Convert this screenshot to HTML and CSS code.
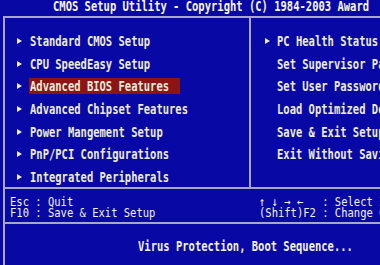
FILE: index.html
```html
<!DOCTYPE html>
<html>
<head>
<meta charset="utf-8">
<link rel="stylesheet" href="styles.css">
</head>
<body>
<div class="screen">
  <div class="title"><span class="t">CMOS Setup Utility - Copyright (C) 1984-2003 Award</span></div>
  <div class="frame">
    <div class="menu">
      <div class="col left">
        <div class="row"><i class="arr"></i><span class="lab"><span class="t">Standard CMOS Setup</span></span></div>
        <div class="row"><i class="arr"></i><span class="lab"><span class="t">CPU SpeedEasy Setup</span></span></div>
        <div class="row sel"><i class="arr"></i><span class="lab"><span class="t">Advanced BIOS Features</span></span></div>
        <div class="row"><i class="arr"></i><span class="lab"><span class="t">Advanced Chipset Features</span></span></div>
        <div class="row"><i class="arr"></i><span class="lab"><span class="t">Power Mangement Setup</span></span></div>
        <div class="row"><i class="arr"></i><span class="lab"><span class="t">PnP/PCI Configurations</span></span></div>
        <div class="row"><i class="arr"></i><span class="lab"><span class="t">Integrated Peripherals</span></span></div>
      </div>
      <div class="col right">
        <div class="row"><i class="arr"></i><span class="lab"><span class="t">PC Health Status</span></span></div>
        <div class="row"><i class="arr none"></i><span class="lab"><span class="t">Set Supervisor Password</span></span></div>
        <div class="row"><i class="arr none"></i><span class="lab"><span class="t">Set User Password</span></span></div>
        <div class="row"><i class="arr none"></i><span class="lab"><span class="t">Load Optimized Defaults</span></span></div>
        <div class="row"><i class="arr none"></i><span class="lab"><span class="t">Save &amp; Exit Setup</span></span></div>
        <div class="row"><i class="arr none"></i><span class="lab"><span class="t">Exit Without Saving</span></span></div>
      </div>
    </div>
    <div class="footer">
      <div class="keys l"><span class="t">Esc : Quit</span><span class="t">F10 : Save &amp; Exit Setup</span></div>
      <div class="keys r"><span class="t">↑ ↓ → ←   : Select Item</span><span class="t">(Shift)F2 : Change Color</span></div>
    </div>
    <div class="status"><span class="t">Virus Protection, Boot Sequence...</span></div>
  </div>
</div>
</body>
</html>
```
FILE: styles.css
```css
html, body {
  margin: 0;
  padding: 0;
}
body {
  background: #0808a4;
  overflow: hidden;
  font-family: "DejaVu Sans Mono", monospace;
  font-weight: bold;
  font-size: 13.7px;
  color: #ececdc;
}
.screen {
  width: 380px;
  height: 265px;
  overflow: hidden;
  background: #0808a4;
}
.t {
  display: inline-block;
  white-space: pre;
  transform: scaleX(0.767);
  transform-origin: 0 50%;
}
.title {
  height: 16px;
  line-height: 12px;
  padding-left: 53px;
  color: #f6f6f6;
  white-space: nowrap;
}
.frame {
  margin-left: 3px;
  width: 600px;
  border-left: 2px solid #a8a8c4;
  border-top: 2px solid #a8a8c4;
}
.menu {
  display: flex;
  height: 169px;
}
.col {
  padding-top: 11.7px;
}
.left {
  flex: none;
  width: 244px;
  border-right: 2px solid #a8a8c4;
}
.right {
  flex: 1;
  min-width: 0;
}
.row {
  display: flex;
  align-items: center;
  height: 22.7px;
}
.arr {
  flex: none;
  width: 0;
  height: 0;
  border-left: 5px solid #ececec;
  border-top: 3px solid transparent;
  border-bottom: 3px solid transparent;
}
.arr.none {
  border-left-color: transparent;
}
.left .arr {
  margin-left: 12px;
}
.right .arr {
  margin-left: 14px;
}
.lab {
  display: flex;
  align-items: center;
  height: 16px;
  line-height: 16px;
  width: 150px;
  padding-left: 1px;
  white-space: nowrap;
}
.left .lab {
  margin-left: 7px;
}
.right .lab {
  margin-left: 6px;
}
.sel .lab {
  background: #8c1414;
}
.footer {
  display: flex;
  border-top: 2px solid #a8a8c4;
  padding: 6.5px 0 4px;
  font-weight: normal;
  font-size: 12.5px;
  color: #f2f2f2;
}
.footer .t {
  transform: scaleX(0.84);
}
.keys {
  display: flex;
  flex-direction: column;
  line-height: 11px;
}
.keys.l {
  flex: none;
  width: 241px;
  padding-left: 5px;
}
.keys.r {
  padding-left: 8px;
}
.status {
  border-top: 2px solid #a8a8c4;
  padding-top: 17.7px;
  padding-left: 133px;
  line-height: 11px;
  height: 60px;
  color: #f2f2e6;
}
```
